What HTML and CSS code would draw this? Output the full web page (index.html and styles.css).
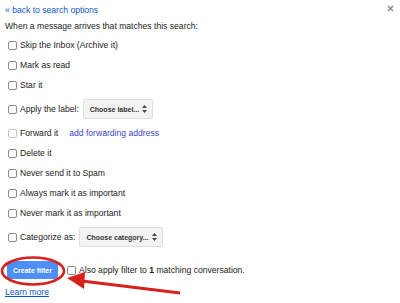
FILE: index.html
```html
<!DOCTYPE html>
<html lang="en">

<head>
    <meta charset="UTF-8">
    <meta name="viewport" content="width=device-width, initial-scale=1.0">
    <title>Create filter</title>
    <link rel="stylesheet" href="styles.css">
</head>

<body>
    <div class="filter-panel">
        <span class="close-btn">
            <svg width="7" height="7" viewBox="0 0 7 7"><path d="M1 1L6 6M6 1L1 6" stroke="#888" stroke-width="1.4"/></svg>
        </span>

        <a class="back-link" href="#">&laquo; back to search options</a>
        <p class="intro">When a message arrives that matches this search:</p>

        <div class="options">
            <label class="option"><span class="check"></span>Skip the Inbox (Archive it)</label>
            <label class="option"><span class="check"></span>Mark as read</label>
            <label class="option"><span class="check"></span>Star it</label>
            <label class="option tall"><span class="check"></span>Apply the label:
                <span class="fake-select label-select">Choose label...
                    <svg width="5" height="8" viewBox="0 0 5 8"><path d="M2.5 0L5 3H0zM2.5 8L0 5h5z" fill="#444"/></svg>
                </span>
            </label>
            <label class="option"><span class="check disabled"></span>Forward it
                <a class="forward-link" href="#">add forwarding address</a>
            </label>
            <label class="option"><span class="check"></span>Delete it</label>
            <label class="option"><span class="check"></span>Never send it to Spam</label>
            <label class="option"><span class="check"></span>Always mark it as important</label>
            <label class="option"><span class="check"></span>Never mark it as important</label>
            <label class="option tall"><span class="check"></span>Categorize as:
                <span class="fake-select category-select">Choose category...
                    <svg width="5" height="8" viewBox="0 0 5 8"><path d="M2.5 0L5 3H0zM2.5 8L0 5h5z" fill="#444"/></svg>
                </span>
            </label>
        </div>

        <div class="actions">
            <button class="create-btn">Create filter</button>
            <label class="option also"><span class="check"></span>Also apply filter to&nbsp;<b>1</b>&nbsp;matching conversation.</label>
        </div>
        <a class="learn-more" href="#">Learn more</a>

        <!-- red annotation -->
        <svg class="annotation" width="400" height="303" viewBox="0 0 400 303">
            <ellipse cx="33" cy="271" rx="31" ry="13.5" fill="none" stroke="#d8201c" stroke-width="2.6"/>
            <line x1="180" y1="293" x2="82" y2="281" stroke="#d8201c" stroke-width="3.2"/>
            <path d="M67 278L85 272L84 289z" fill="#d8201c"/>
        </svg>
    </div>
</body>

</html>
```

FILE: styles.css
```css
* {
    margin: 0;
    padding: 0;
    box-sizing: border-box;
    font-family: "Liberation Sans", Arial, sans-serif;
}

body {
    background-color: #ffffff;
    color: #222;
    font-size: 8.6px;
}

.filter-panel {
    position: relative;
    width: 400px;
    height: 303px;
    padding: 3px 5px 0 5px;
}

.close-btn {
    position: absolute;
    top: 4px;
    right: 6px;
}

.back-link {
    display: block;
    line-height: 14px;
    color: #1155cc;
    text-decoration: none;
}

.intro {
    margin-top: 2px;
    line-height: 14px;
}

.options {
    margin-top: 2px;
    display: flex;
    flex-direction: column;
}

.option {
    display: flex;
    align-items: center;
    height: 20px;
    white-space: nowrap;
}

.option.tall {
    height: 28px;
}

.check {
    width: 9px;
    height: 9px;
    margin: 0 3px 0 3px;
    border: 1px solid #8a8a8a;
    border-radius: 2px;
    background-color: #fff;
}

.check.disabled {
    border-color: #c4c4c4;
}

.fake-select {
    display: flex;
    align-items: center;
    justify-content: space-between;
    height: 20px;
    margin-left: 4px;
    padding: 0 5px 0 6px;
    background-color: #f3f3f3;
    border: 1px solid #dedede;
    border-radius: 2px;
    font-size: 7px;
    font-weight: bold;
    color: #333;
}

.label-select {
    width: 70px;
}

.category-select {
    width: 84px;
}

.forward-link {
    margin-left: 11px;
    color: #3b48c4;
    text-decoration: none;
}

.actions {
    display: flex;
    align-items: center;
    height: 24px;
    margin-top: 7px;
}

.create-btn {
    width: 51px;
    height: 18px;
    margin-left: 2px;
    background-color: #4d8ff6;
    color: white;
    border: none;
    border-radius: 3px;
    font-size: 7px;
    font-weight: bold;
}

.option.also {
    margin-left: 6px;
}

.learn-more {
    display: block;
    line-height: 14px;
    margin-top: 3px;
    color: #1155cc;
}

.annotation {
    position: absolute;
    left: 0;
    top: 0;
    pointer-events: none;
}
```
